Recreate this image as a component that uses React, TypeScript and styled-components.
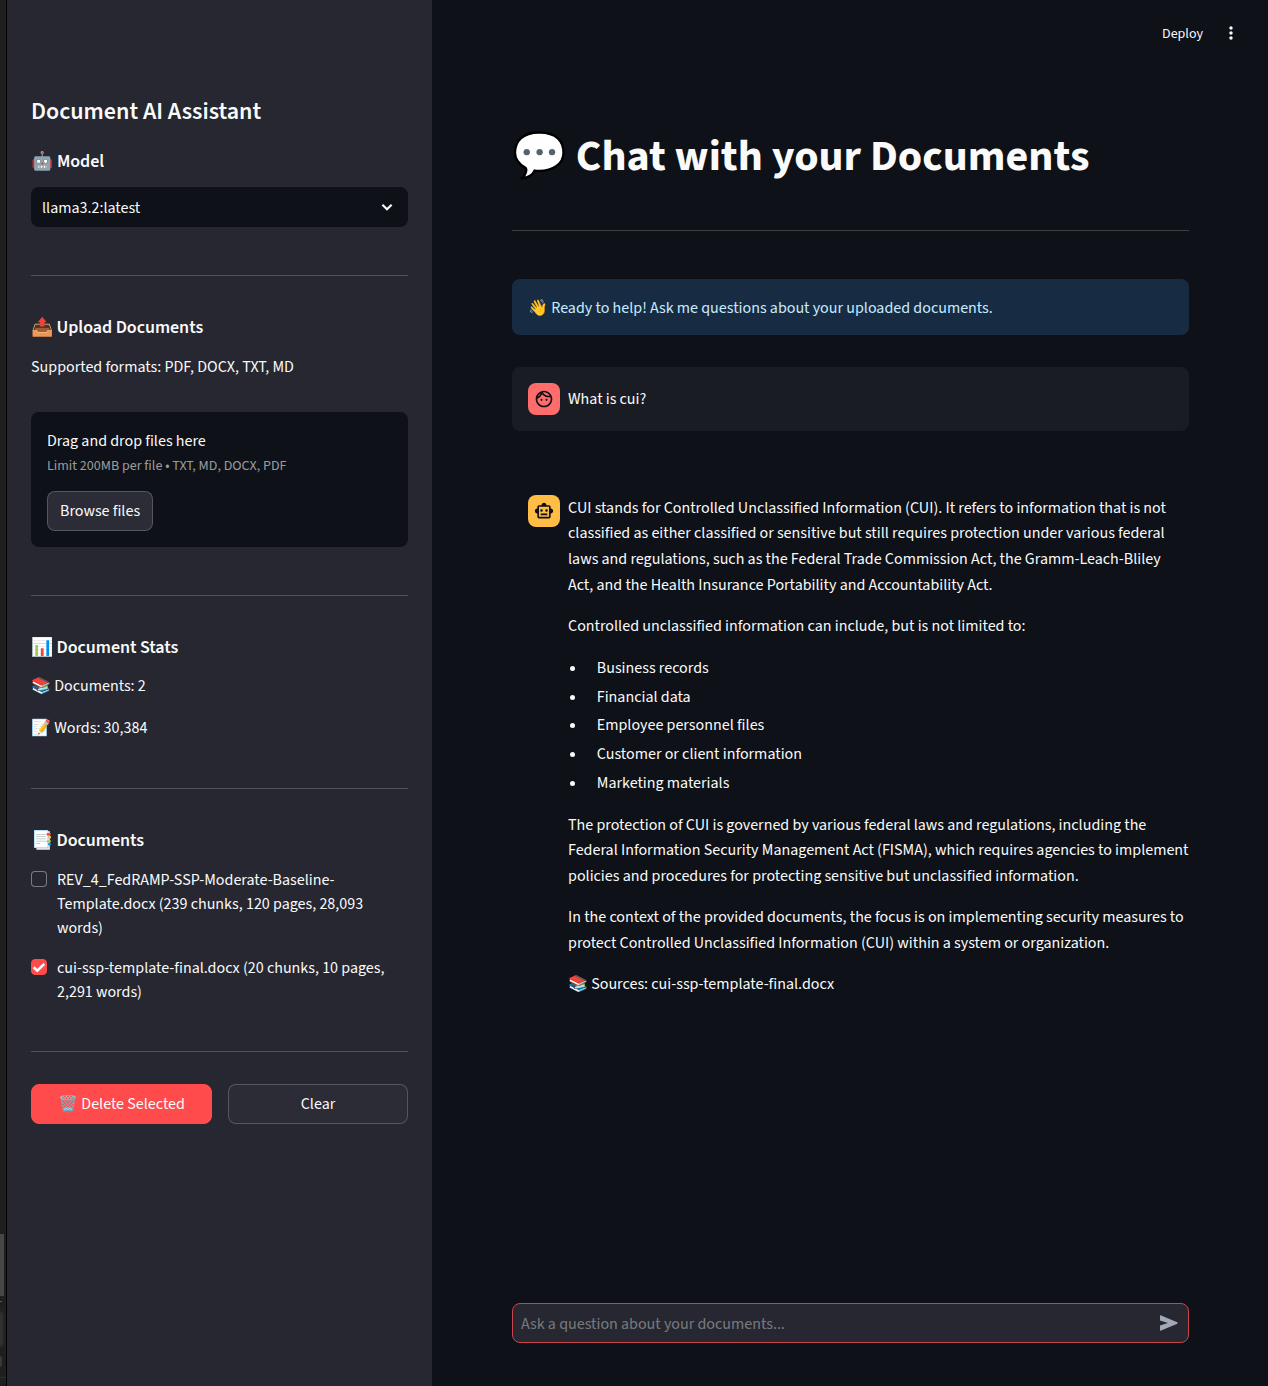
import React from 'react';
import styled, { createGlobalStyle } from 'styled-components';
import { MdMoreVert, MdOutlineFace, MdOutlineSmartToy } from 'react-icons/md';

const color = {
  page: '#0e1117',
  sidebar: '#262730',
  text: '#fafafa',
  line: 'rgba(250, 250, 250, 0.2)',
  primary: '#ff4b4b',
  button: '#2b2c36',
};

const GlobalStyle = createGlobalStyle`
  *, *::before, *::after { box-sizing: border-box; }
  body {
    margin: 0;
    background: ${color.page};
    color: ${color.text};
    font: 400 16px/1.6 'Source Sans 3', 'Source Sans Pro', 'Noto Sans CJK JP', sans-serif;
  }
  p, h1, h2, h3, ul { margin: 0; padding: 0; }
  button, input { font: inherit; color: inherit; }
`;

const Shell = styled.div`
  display: flex;
  height: 1386px;
  overflow: hidden;
`;

const EdgeStrip = styled.div`
  display: flex;
  flex-direction: column;
  flex: none;
  width: 7px;
  padding-top: 1234px;
  overflow: hidden;
  background: #1f1f1f;
  border-right: 1px solid #000;
`;

const ScrollThumb = styled.div`
  width: 4px;
  height: 62px;
  background: #474747;
`;

const EdgeMark = styled.div`
  width: 2px;
  height: 1px;
  margin-top: 5px;
  background: #5a5a5a;
`;

const EdgePill = styled.div`
  width: 5px;
  height: 38px;
  margin-top: 8px;
  border: solid #242424;
  border-width: 2px 2px 2px 0;
  border-radius: 0 5px 5px 0;
  background: #303030;
`;

const EdgeDot = styled.div`
  width: 2px;
  height: 11px;
  margin-top: 8px;
  border-radius: 0 2px 2px 0;
  background: #383838;
`;

const EdgeRule = styled.div`
  height: 1px;
  margin-top: 10px;
  background: #2e2e2e;
`;

const Sidebar = styled.aside`
  display: flex;
  flex-direction: column;
  flex: none;
  width: 425px;
  padding: 98px 24px 0;
  background: ${color.sidebar};
`;

const SidebarTitle = styled.h2`
  margin-bottom: 24px;
  font-size: 24px;
  font-weight: 600;
  line-height: 28.8px;
`;

const SectionTitle = styled.h3<{ $gap: number }>`
  margin-bottom: ${(p) => p.$gap}px;
  font-size: 18px;
  font-weight: 600;
  line-height: 21.6px;
  letter-spacing: -0.05px;
`;

const Emoji = styled.span`
  font-family: 'Noto Color Emoji', sans-serif;
  line-height: 0;
`;

const Select = styled.button`
  display: flex;
  align-items: center;
  justify-content: space-between;
  height: 40px;
  padding: 0 14px 0 11px;
  border: 0;
  border-radius: 8px;
  background: ${color.page};
`;

const SelectValue = styled.span`
  padding-top: 3px;
`;

const Section = styled.section<{ $top: number; $lead?: number }>`
  display: flex;
  flex-direction: column;
  margin-top: ${(p) => p.$top}px;
  padding-top: ${(p) => p.$lead ?? 40.6}px;
  border-top: 1px solid ${color.line};
`;

const Paragraph = styled.p`
  & + & { margin-top: 16px; }
`;

const Dropzone = styled.div`
  display: flex;
  flex-direction: column;
  align-items: flex-start;
  height: 135px;
  margin-top: 31.2px;
  padding: 17px 16px 16px;
  border-radius: 8px;
  background: ${color.page};
`;

const DropHint = styled.small`
  margin-top: 1px;
  font-size: 14px;
  line-height: 21px;
  color: rgba(250, 250, 250, 0.6);
`;

const Button = styled.button<{ $primary?: boolean }>`
  height: 40px;
  padding: 2px 12px 0;
  border: 1px solid ${(p) => (p.$primary ? color.primary : color.line)};
  border-radius: 8px;
  background: ${(p) => (p.$primary ? color.primary : color.button)};
  line-height: 25.6px;
`;

const BrowseButton = styled(Button)`
  flex: none;
  margin-top: 14.4px;
`;

const ButtonRow = styled.div`
  display: grid;
  grid-template-columns: 181px 180px;
  gap: 16px;
`;

const CheckList = styled.div`
  display: flex;
  flex-direction: column;
  gap: 16px;
`;

const CheckRow = styled.label`
  display: flex;
  align-items: flex-start;
  gap: 10px;
  line-height: 24px;
`;

const CheckBox = styled.span<{ $checked: boolean }>`
  display: grid;
  place-items: center;
  flex: none;
  width: 16px;
  height: 16px;
  margin-top: 3px;
  border: 1px solid ${(p) => (p.$checked ? color.primary : 'rgba(250, 250, 250, 0.4)')};
  border-radius: 4px;
  background: ${(p) => (p.$checked ? color.primary : color.sidebar)};
`;

const Main = styled.main`
  display: flex;
  flex-direction: column;
  flex: 1;
  min-width: 0;
`;

const Toolbar = styled.header`
  display: flex;
  align-items: center;
  justify-content: flex-end;
  gap: 18px;
  height: 66px;
  padding-right: 27px;
  font-size: 14px;
`;

const DeployLink = styled.span`
  padding-top: 2px;
`;

const Content = styled.div`
  display: flex;
  flex-direction: column;
  flex: 1;
  padding: 0 79px 43px 80px;
`;

const PageTitle = styled.h1`
  margin-top: 65px;
  font-size: 44px;
  font-weight: 700;
  line-height: 52.8px;
`;

const Rule = styled.div`
  height: 1px;
  margin: 46.2px 0 48px;
  background: ${color.line};
`;

const Notice = styled.div`
  height: 56px;
  padding: 17px 16px 0;
  border-radius: 8px;
  background: rgba(61, 157, 243, 0.2);
  color: #c7ebff;
`;

const Message = styled.article<{ $filled?: boolean }>`
  display: flex;
  align-items: flex-start;
  gap: 8px;
  margin-top: ${(p) => (p.$filled ? 32 : 48)}px;
  padding: ${(p) => (p.$filled ? '16px' : '16px 0 16px 16px')};
  border-radius: 8px;
  background: ${(p) => (p.$filled ? '#1a1c24' : 'transparent')};
`;

const Avatar = styled.div<{ $tone: string }>`
  display: grid;
  place-items: center;
  flex: none;
  width: 32px;
  height: 32px;
  border-radius: 8px;
  background: ${(p) => p.$tone};
  color: ${color.page};
`;

const MessageBody = styled.div<{ $inset?: boolean }>`
  flex: 1;
  min-width: 0;
  padding-top: ${(p) => (p.$inset ? 4 : 0.85)}px;
`;

const BulletList = styled.ul`
  margin: 16px 0;
`;

const Bullet = styled.li`
  margin: 3.2px 0 3.2px 19.2px;
  padding-left: 9.6px;
`;

const ChatInput = styled.div`
  display: flex;
  align-items: center;
  height: 40px;
  margin-top: auto;
  padding: 0 7px 0 8px;
  border: 1px solid #cb4449;
  border-radius: 8px;
  background: ${color.sidebar};
`;

const ChatField = styled.input`
  flex: 1;
  padding: 3px 0 0;
  border: 0;
  outline: 0;
  background: transparent;
  &::placeholder { color: rgba(250, 250, 250, 0.4); opacity: 1; }
`;

const documents = [
  { label: 'REV_4_FedRAMP-SSP-Moderate-Baseline-Template.docx (239 chunks, 120 pages, 28,093 words)', checked: false },
  { label: 'cui-ssp-template-final.docx (20 chunks, 10 pages, 2,291 words)', checked: true },
];

const examples = [
  'Business records',
  'Financial data',
  'Employee personnel files',
  'Customer or client information',
  'Marketing materials',
];

function Chevron() {
  return (
    <svg width="14" height="10" viewBox="0 0 14 10" fill="none">
      <path d="M2.4 2.8 7 7.2l4.6-4.4" stroke={color.text} strokeWidth="2.2" />
    </svg>
  );
}

function Tick() {
  return (
    <svg width="14" height="14" viewBox="0 0 14 14" fill="none">
      <path d="M1.6 7.2 5.3 10.7 12.3 3.9" stroke={color.text} strokeWidth="2.6" />
    </svg>
  );
}

function SendIcon() {
  return (
    <svg width="24" height="24" viewBox="0 0 24 24" fill="#a3a8b8">
      <path d="M3 4.4v5.2L11 12l-8 2.4v5.2l.6.2 16.6-7.1c.6-.3.6-1.1 0-1.4L3.6 4.2z" />
    </svg>
  );
}

export default function App() {
  return (
    <>
      <GlobalStyle />
      <Shell>
        <EdgeStrip>
          <ScrollThumb />
          <EdgeMark />
          <EdgePill />
          <EdgeDot />
          <EdgeRule />
        </EdgeStrip>
        <Sidebar>
          <SidebarTitle>Document AI Assistant</SidebarTitle>
          <SectionTitle $gap={14.6}><Emoji>🤖</Emoji> Model</SectionTitle>
          <Select>
            <SelectValue>llama3.2:latest</SelectValue>
            <Chevron />
          </Select>
          <Section $top={48}>
            <SectionTitle $gap={17}>📤 Upload Documents</SectionTitle>
            <Paragraph>Supported formats: PDF, DOCX, TXT, MD</Paragraph>
            <Dropzone>
              <span>Drag and drop files here</span>
              <DropHint>Limit 200MB per file • TXT, MD, DOCX, PDF</DropHint>
              <BrowseButton>Browse files</BrowseButton>
            </Dropzone>
          </Section>
          <Section $top={48}>
            <SectionTitle $gap={16}>📊 Document Stats</SectionTitle>
            <Paragraph>📚 Documents: 2</Paragraph>
            <Paragraph>📝 Words: 30,384</Paragraph>
          </Section>
          <Section $top={46.8}>
            <SectionTitle $gap={16.8}>📑 Documents</SectionTitle>
            <CheckList>
              {documents.map((doc) => (
                <CheckRow key={doc.label}>
                  <CheckBox $checked={doc.checked}>{doc.checked && <Tick />}</CheckBox>
                  <span>{doc.label}</span>
                </CheckRow>
              ))}
            </CheckList>
          </Section>
          <Section $top={47} $lead={32}>
            <ButtonRow>
              <Button $primary>🗑️ Delete Selected</Button>
              <Button>Clear</Button>
            </ButtonRow>
          </Section>
        </Sidebar>
        <Main>
          <Toolbar>
            <DeployLink>Deploy</DeployLink>
            <MdMoreVert size={20} />
          </Toolbar>
          <Content>
            <PageTitle>💬 Chat with your Documents</PageTitle>
            <Rule />
            <Notice>👋 Ready to help! Ask me questions about your uploaded documents.</Notice>
            <Message $filled>
              <Avatar $tone="#ff6c6c"><MdOutlineFace size={20} /></Avatar>
              <MessageBody $inset>What is cui?</MessageBody>
            </Message>
            <Message>
              <Avatar $tone="#ffbd45"><MdOutlineSmartToy size={20} /></Avatar>
              <MessageBody>
                <Paragraph>
                  CUI stands for Controlled Unclassified Information (CUI). It refers to information that is not classified as
                  either classified or sensitive but still requires protection under various federal laws and regulations, such
                  as the Federal Trade Commission Act, the Gramm-Leach-Bliley Act, and the Health Insurance Portability and
                  Accountability Act.
                </Paragraph>
                <Paragraph>Controlled unclassified information can include, but is not limited to:</Paragraph>
                <BulletList>
                  {examples.map((item) => (
                    <Bullet key={item}>{item}</Bullet>
                  ))}
                </BulletList>
                <Paragraph>
                  The protection of CUI is governed by various federal laws and regulations, including the Federal Information
                  Security Management Act (FISMA), which requires agencies to implement policies and procedures for protecting
                  sensitive but unclassified information.
                </Paragraph>
                <Paragraph>
                  In the context of the provided documents, the focus is on implementing security measures to protect
                  Controlled Unclassified Information (CUI) within a system or organization.
                </Paragraph>
                <Paragraph>📚 Sources: cui-ssp-template-final.docx</Paragraph>
              </MessageBody>
            </Message>
            <ChatInput>
              <ChatField placeholder="Ask a question about your documents..." />
              <SendIcon />
            </ChatInput>
          </Content>
        </Main>
      </Shell>
    </>
  );
}
